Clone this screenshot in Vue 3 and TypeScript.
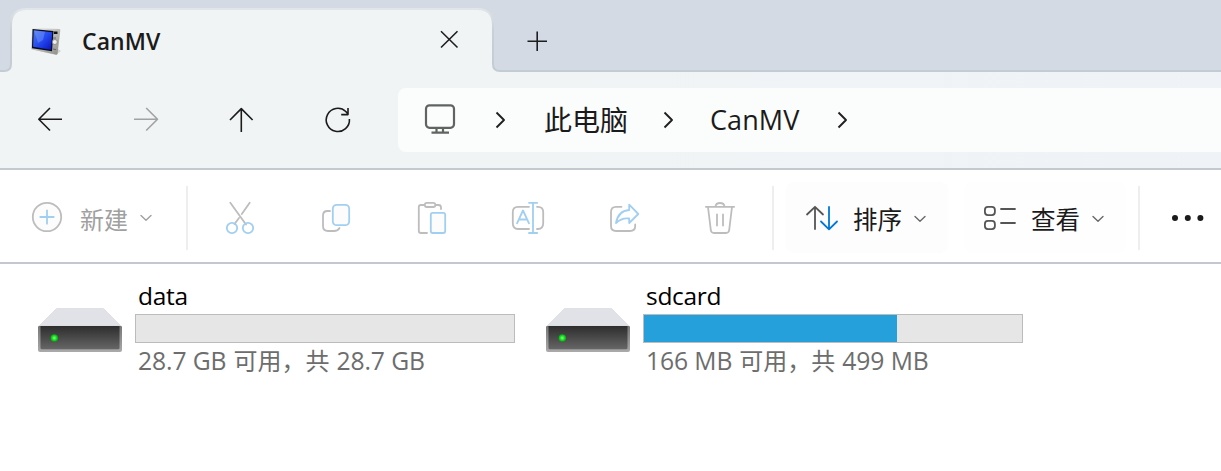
<script setup lang="ts">
interface Drive {
  name: string
  free: string
  total: string
  used: number
}

const drives: Drive[] = [
  { name: 'data', free: '28.7 GB', total: '28.7 GB', used: 0 },
  { name: 'sdcard', free: '166 MB', total: '499 MB', used: 67 },
]
</script>

<template>
  <div class="window">
    <header class="tabs">
      <svg class="tab-shape" width="1221" height="72" viewBox="0 0 1221 72">
        <path d="M0 72V71H4Q11 71 11 64V24Q11 9 27 9H477Q493 9 493 25V64Q493 71 500 71H1221V72Z" fill="#f0f4f5" />
        <path d="M0 71H4Q11 71 11 64V25Q11 9 27 9H477Q493 9 493 25V64Q493 71 500 71H1221" fill="none" stroke="url(#edge)" stroke-width="2" />
        <defs>
          <linearGradient id="edge" gradientUnits="userSpaceOnUse" x1="0" y1="8" x2="0" y2="72">
            <stop offset="0" stop-color="#e2e6e9" /><stop offset=".35" stop-color="#c9d1d7" /><stop offset="1" stop-color="#c3ccd2" />
          </linearGradient>
        </defs>
      </svg>
      <div class="tab">
        <svg class="device" width="32" height="32" viewBox="30 25 32 32">
          <defs>
            <linearGradient id="screen" x1="0" y1="0" x2="1" y2="1">
              <stop offset="0" stop-color="#4c7bed" /><stop offset=".5" stop-color="#254af0" /><stop offset="1" stop-color="#0711bd" />
            </linearGradient>
            <linearGradient id="metal" x1="0" y1="0" x2="1" y2="1">
              <stop offset="0" stop-color="#f1f0ec" /><stop offset="1" stop-color="#8d8b86" />
            </linearGradient>
          </defs>
          <path d="M31 49L56 55L61 51L58 49L34 46Z" fill="#999" opacity=".35" />
          <path d="M32 28L59.5 29Q60.5 29 60.3 30.5L57.5 54Q57 55 55.5 54.6L32 49.5Q31 49 31.1 48Z" fill="url(#metal)" />
          <path d="M32.5 28.9L53.5 31L52 51.3L32 48.2Z" fill="#080b20" />
          <path d="M33.7 30.3L52.2 32.2L51 49.7L33.1 46.7Z" fill="url(#screen)" />
          <path d="M34 30.5L45 31.7L43 40L38 43Z" fill="#8eafff" opacity=".35" />
          <path d="M54 31.5H57.5V34H53.8Z" fill="#111" />
          <circle cx="54.8" cy="42" r="2.5" fill="#eee" stroke="#777" stroke-width=".7" />
          <path d="M53 49L56 49.6M53 38H56" stroke="#555" stroke-width=".8" />
        </svg>
        <span class="tab-title">CanMV</span>
        <svg class="close" width="20" height="20" viewBox="439 30 20 20"><path d="M441 31.2L457.5 47.5M457.5 31.2L441 47.5" /></svg>
      </div>
      <svg class="plus" width="22" height="22" viewBox="526 30 22 22"><path d="M527.5 41.3H547M537.2 31.5V51" /></svg>
    </header>

    <nav class="nav">
      <div class="nav-button"><svg width="30" height="30" viewBox="35 105 30 30"><path d="M62 119.3H38.8M50 108L38.8 119.3L50 130.5" /></svg></div>
      <div class="nav-button disabled"><svg width="30" height="30" viewBox="131 105 30 30"><path d="M134 119.3H157.5M146.2 108L157.5 119.3L146.2 130.5" /></svg></div>
      <div class="nav-button"><svg width="30" height="30" viewBox="227 105 30 30"><path d="M241.3 132V108.6M230 120L241.3 108.6L252.6 120" /></svg></div>
      <div class="nav-button"><svg width="30" height="30" viewBox="323 105 30 30"><path d="M349.4 119A11.6 11.6 0 1 1 345.8 111.5L348 114M348 108V114.6H341.2" /></svg></div>
      <div class="address">
        <svg class="monitor" width="32" height="32" viewBox="424 103 32 32"><rect x="426" y="105.3" width="28" height="22.5" rx="3.5" /><path d="M436.5 128V132M443 128V132M431.5 132.6H449" /></svg>
        <svg class="crumb-arrow first" width="12" height="20" viewBox="495 110 12 20"><path d="M496.5 112.5L504 120L496.5 127.5" /></svg>
        <span class="crumb cjk">此电脑</span>
        <svg class="crumb-arrow second" width="12" height="20" viewBox="495 110 12 20"><path d="M496.5 112.5L504 120L496.5 127.5" /></svg>
        <span class="crumb latin">CanMV</span>
        <svg class="crumb-arrow third" width="12" height="20" viewBox="495 110 12 20"><path d="M496.5 112.5L504 120L496.5 127.5" /></svg>
      </div>
    </nav>

    <section class="toolbar">
      <div class="new">
        <svg width="32" height="32" viewBox="31 201 32 32"><circle cx="47" cy="217" r="14.2" class="g" /><path d="M40.3 217H53.7M47 210.3V223.7" class="b" /></svg>
        <span>新建</span>
        <svg class="drop" width="12" height="8" viewBox="0 0 12 8"><path d="M1 1.5L6 6.2L11 1.5" class="chev" /></svg>
      </div>
      <i class="divider"></i>
      <div class="tool"><svg width="36" height="36" viewBox="222 200 36 36"><path d="M230.3 202.8L246 224.5M249.7 202.8L241.8 214M239 218L234.5 224" class="g" /><circle cx="232" cy="228" r="5.2" class="b" /><circle cx="248" cy="228" r="5.2" class="b" /></svg></div>
      <div class="tool"><svg width="36" height="36" viewBox="318 200 36 36"><path d="M330 211H327.5Q323 211 323 215.5V226Q323 231 328 231H334Q338 231 339.5 228" class="g" /><rect x="332.8" y="204.8" width="16.4" height="20.4" rx="4" class="b" /></svg></div>
      <div class="tool"><svg width="36" height="36" viewBox="414 200 36 36"><path d="M425 205H421Q418.8 205 418.8 207V231Q418.8 233 421 233H427M435 205H438.5Q441 205 441 207.5V209" class="g" /><rect x="424.8" y="202.8" width="10.5" height="4.2" rx="2" class="g" /><rect x="430.8" y="212.8" width="14.4" height="20.2" rx="2" class="b" /></svg></div>
      <div class="tool"><svg width="36" height="36" viewBox="510 200 36 36"><path d="M529 206.8H518Q512.8 206.8 512.8 212V223Q512.8 229 518 229H529M537 206.8H538Q543.2 206.8 543.2 212V223Q543.2 229 538 229H537" class="g" /><path d="M529 202.8H537.2M533 202.8V233M529 233H537.2M517 223.3L523 210.5L529 223.3M519 219.5H527" class="b" /></svg></div>
      <div class="tool"><svg width="36" height="36" viewBox="606 200 36 36"><path d="M621.5 206.8H616Q611 206.8 611 212V226Q611 231 616 231H630Q635.2 231 635.2 226V224.5" class="g" /><path d="M629.2 204.7L638.3 214L629.2 223V218.5Q621.5 217.5 616 223.2Q618 210.8 629.2 210Z" class="b" /></svg></div>
      <div class="tool"><svg width="36" height="36" viewBox="702 200 36 36"><path d="M705.8 206.8H734.2M715.5 206.5C716 201.8 724 201.8 724.5 206.5M708 207L710.8 230Q711.2 233 714 233H726Q728.8 233 729.2 230L732 207M717 214.5V225.5M723 214.5V225.5" class="g" /></svg></div>
      <i class="divider after-tools"></i>
      <div class="command sort">
        <svg width="34" height="28" viewBox="805 204 34 28"><path d="M815 229V207M807 214.5L815 206.8L823 214.5" class="dark" /><path d="M829 207V229M821 221.5L829 229.3L837 221.5" class="blue" /></svg>
        <span>排序</span>
        <svg class="drop" width="12" height="8" viewBox="0 0 12 8"><path d="M1 1.5L6 6.2L11 1.5" class="chev strong" /></svg>
      </div>
      <div class="command view">
        <svg width="34" height="28" viewBox="983 204 34 28"><rect x="984.9" y="206.9" width="10" height="8.2" rx="3" class="dark" /><rect x="984.9" y="220.9" width="10" height="8.2" rx="3" class="dark" /><path d="M1001 209H1015M1001 223H1015" class="dark" /></svg>
        <span>查看</span>
        <svg class="drop" width="12" height="8" viewBox="0 0 12 8"><path d="M1 1.5L6 6.2L11 1.5" class="chev strong" /></svg>
      </div>
      <i class="divider after-view"></i>
      <svg class="more" width="34" height="8" viewBox="0 0 34 8"><circle cx="4" cy="4" r="3" /><circle cx="16.8" cy="4" r="3" /><circle cx="29.4" cy="4" r="3" /></svg>
    </section>

    <main class="drives">
      <article v-for="drive in drives" :key="drive.name" class="drive">
        <svg class="disk" width="86" height="46" viewBox="37 307 86 46">
          <defs>
            <linearGradient id="disk-front" x1="0" y1="0" x2="0" y2="1"><stop offset="0" stop-color="#2d2d2d" /><stop offset="1" stop-color="#666" /></linearGradient>
            <linearGradient id="disk-rim" x1="0" y1="0" x2="0" y2="1"><stop offset="0" stop-color="#777" /><stop offset="1" stop-color="#aaa" /></linearGradient>
            <radialGradient id="led"><stop offset="0" stop-color="#90ff82" /><stop offset=".5" stop-color="#20e82a" /><stop offset="1" stop-color="#079f10" /></radialGradient>
          </defs>
          <path d="M56.5 308.5H103.5L121 326H39Z" fill="#e1e2e7" stroke="#d5d7dc" stroke-width=".6" />
          <path d="M39 326H121Q122 326 122 327V350Q122 352 120 352H40Q38 352 38 350V327Q38 326 39 326Z" fill="url(#disk-rim)" />
          <path d="M40.5 326H119.5V348Q119.5 349.2 118 349.2H42Q40.5 349.2 40.5 348Z" fill="url(#disk-front)" />
          <circle cx="54.3" cy="338" r="3.8" fill="url(#led)" />
        </svg>
        <div class="info">
          <div class="name">{{ drive.name }}</div>
          <div class="meter"><div class="fill" :style="{ width: drive.used + '%' }"></div></div>
          <div class="space"><span>{{ drive.free }}</span><b>可用，共</b><span>{{ drive.total }}</span></div>
        </div>
      </article>
    </main>
  </div>
</template>

<style>
body { margin: 0; background: #fff; }
</style>

<style scoped>
.window { width: 1221px; height: 471px; overflow: hidden; background: #fff; font-family: "Open Sans", "Noto Sans CJK SC", sans-serif; color: #1b1b1b; }
svg { display: block; flex: none; fill: none; }
.tabs { position: relative; display: flex; height: 72px; background: #d3dae3; }
.tab-shape { position: absolute; left: 0; top: 0; }
.tab { position: relative; box-sizing: border-box; display: flex; width: 482px; margin-left: 11px; padding: 25px 34px 0 19px; }
.tab-title { margin-left: 20px; line-height: 32px; font-size: 23px; font-weight: 600; letter-spacing: .1px; white-space: nowrap; }
.close { margin: 5px 0 0 auto; }
.plus { position: relative; margin: 30px 0 0 33px; }
.close, .plus { stroke: #1d1e20; stroke-width: 1.6; }
.nav { box-sizing: border-box; display: flex; height: 98px; padding: 16px 0 0 2px; background: linear-gradient(90deg, #f0f4f5 45%, #eff3f7); border-bottom: 2px solid #c2cacf; }
.nav-button { display: flex; width: 96px; height: 64px; justify-content: center; align-items: center; stroke: #1b1b1b; stroke-width: 1.6; stroke-linejoin: round; }
.nav-button svg { margin-top: -1px; }
.disabled { stroke: #a0a2a3; }
.address { display: flex; align-items: center; flex: 1; height: 64px; margin-left: 12px; padding-left: 26px; background: #fbfdfc; border-radius: 8px 0 0 8px; }
.monitor { stroke: #606461; stroke-width: 2.2; margin-top: -2px; }
.crumb-arrow { stroke: #202020; stroke-width: 1.9; stroke-linejoin: round; }
.first { margin-left: 39px; }
.crumb { font-size: 28px; line-height: 40px; white-space: nowrap; }
.crumb.cjk { width: 84px; margin: -2px 0 0 37px; font-family: "Noto Sans CJK SC", sans-serif; }
.second { margin-left: 35px; }
.latin { width: 90px; margin-left: 35px; font-size: 27px; letter-spacing: .1px; }
.third { margin-left: 37px; }
.toolbar { box-sizing: border-box; display: flex; align-items: flex-start; height: 94px; border-bottom: 2px solid #c2c8ce; }
.toolbar svg { stroke-width: 1.8; stroke-linecap: round; stroke-linejoin: round; }
.g { stroke: #bdbdbd; fill: #fcfcfc; }
path.g { fill: none; }
.b { stroke: #a1cff1; fill: none; }
rect.b { fill: #fcfcfc; }
.new { box-sizing: border-box; display: flex; align-items: center; width: 186px; height: 94px; padding: 0 0 0 31px; color: #a0a0a0; }
.new span { margin: 3px 12px 0 17px; font: 24px/34px "Noto Sans CJK SC", sans-serif; }
.drop { margin-top: 2px; }
.toolbar .chev { stroke: #a0a0a0; stroke-width: 1.4; }
.toolbar .strong { stroke: #686868; }
.divider { flex: none; width: 2px; height: 64px; margin-top: 16px; background: #eee; }
.tool { display: flex; width: 96px; justify-content: center; padding-top: 30px; }
.tool:nth-of-type(2) { margin-left: 4px; }
.after-tools { margin-left: 4px; }
.command { box-sizing: border-box; display: flex; align-items: center; width: 162px; height: 71px; margin-top: 12px; background: #fdfdfd; border-radius: 8px; padding-left: 19px; }
.command span { margin: 3px 12px 0 14px; font: 24.5px/34px "Noto Sans CJK SC", sans-serif; }
.sort { margin-left: 12px; }
.view { margin-left: 16px; background: #fefefe; }
.dark { stroke: #555; }
.blue { stroke: #0078d4; }
.after-view { margin-left: 12px; }
.more { margin: 44px 0 0 31px; fill: #1b1b1b; }
.drives { display: flex; padding: 18px 0 0 37px; }
.drive { display: flex; width: 508px; }
.disk { margin-top: 25px; }
.info { width: 380px; margin-left: 12px; }
.name { height: 32px; padding-left: 3px; font-size: 24.5px; line-height: 27px; color: #000; letter-spacing: -.3px; }
.meter { box-sizing: border-box; height: 29px; border: 1px solid #bcbcbc; background: #e6e6e6; }
.fill { height: 100%; background: #26a0da; }
.space { padding-left: 3px; white-space: pre; color: #6d6d6d; font-size: 24.7px; line-height: 36px; letter-spacing: -.1px; }
.space b { margin: 0 7px 0 7px; font: 24px/34px "Noto Sans CJK SC", sans-serif; letter-spacing: 0; }
</style>
